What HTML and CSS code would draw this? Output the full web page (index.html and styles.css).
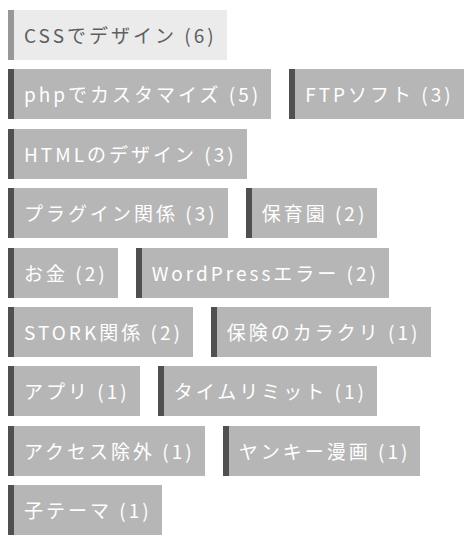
FILE: index.html
```html
<!DOCTYPE html>
<html lang="ja">
  <head>
    <meta charset="UTF-8" />
    <meta name="viewport" content="width=device-width, initial-scale=1.0" />
    <title>カテゴリー</title>
    <link rel="stylesheet" href="styles.css">
  </head>
  <body>
    <ul class="cat-list">
      <li><a class="cat current" href="#">CSSでデザイン (6)</a></li>
      <li><a class="cat" href="#">phpでカスタマイズ (5)</a></li>
      <li><a class="cat" href="#">FTPソフト (3)</a></li>
      <li><a class="cat" href="#">HTMLのデザイン (3)</a></li>
      <li><a class="cat" href="#">プラグイン関係 (3)</a></li>
      <li><a class="cat" href="#">保育園 (2)</a></li>
      <li><a class="cat" href="#">お金 (2)</a></li>
      <li><a class="cat" href="#">WordPressエラー (2)</a></li>
      <li><a class="cat" href="#">STORK関係 (2)</a></li>
      <li><a class="cat" href="#">保険のカラクリ (1)</a></li>
      <li><a class="cat" href="#">アプリ (1)</a></li>
      <li><a class="cat" href="#">タイムリミット (1)</a></li>
      <li><a class="cat" href="#">アクセス除外 (1)</a></li>
      <li><a class="cat" href="#">ヤンキー漫画 (1)</a></li>
      <li><a class="cat" href="#">子テーマ (1)</a></li>
    </ul>
  </body>
</html>
```

FILE: styles.css
```css
body {
  margin: 8px;
  background-color: #fff;
  font-family: "Noto Sans CJK JP", "Noto Sans", sans-serif;
}

.cat-list {
  list-style: none;
  margin: 0;
  padding: 2px 0 0 0;
  display: flex;
  flex-wrap: wrap;
  column-gap: 18px;
  row-gap: 9.4px;
}

.cat {
  display: block;
  height: 50px;
  box-sizing: border-box;
  padding: 0 10px 0 10px;
  line-height: 50px;
  font-size: 19px;
  letter-spacing: 3px;
  color: #fff;
  text-decoration: none;
  background-color: #b6b6b6;
  border-left: 6px solid #505050;
  white-space: nowrap;
}

/* the category being viewed */
.cat.current {
  background-color: #ebebeb;
  border-left-color: #979797;
  color: #5f5f5f;
}
```
